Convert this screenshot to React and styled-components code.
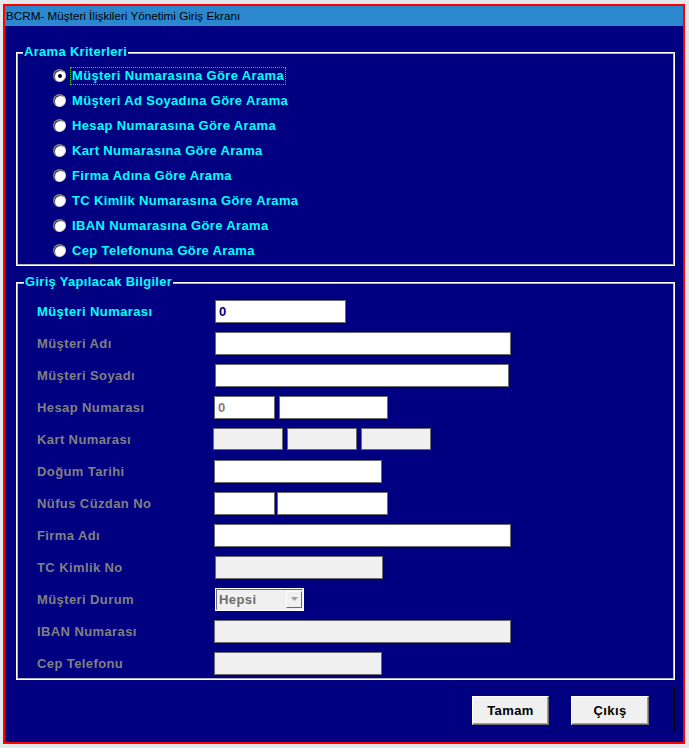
import React from "react";
import styled, { createGlobalStyle } from "styled-components";

const GlobalStyle = createGlobalStyle`
  body {
    margin: 0;
    background: #e4e7eb;
    font-family: "Liberation Sans", Arial, sans-serif;
  }
`;

const Screen = styled.div`
  width: 689px;
  height: 748px;
  box-sizing: border-box;
  padding: 4px 0 0 3px;
  background: #e4e7eb;
`;

const Window = styled.div`
  width: 682px;
  height: 740px;
  box-sizing: border-box;
  border: 2px solid #ff0000;
  display: flex;
  flex-direction: column;
`;

const TitleBar = styled.div`
  height: 20px;
  line-height: 19px;
  padding-left: 1px;
  background: #2b88cf;
  color: #000;
  font-family: "Liberation Sans", Arial, sans-serif;
  font-size: 11.7px;
  white-space: nowrap;
`;

const Body = styled.div`
  flex: 1;
  background: #000080;
  padding: 26px 8px 0 11px;
  display: flex;
  flex-direction: column;
`;

const Group = styled.div`
  position: relative;
  box-sizing: border-box;
  height: ${(p) => p.$height}px;
  margin-top: ${(p) => p.$top || 0}px;
  border: 1px solid #ffffff;
  box-shadow: inset 0 0 0 1px #b4b4b4;
`;

const Legend = styled.span`
  position: absolute;
  top: -9px;
  left: ${(p) => p.$left}px;
  padding: 0 1px;
  background: #000080;
  color: #00ffff;
  font-size: 13px;
  font-weight: bold;
  letter-spacing: 0.3px;
  line-height: 16px;
`;

const RadioList = styled.div`
  display: flex;
  flex-direction: column;
  padding: 10px 0 0 36px;
`;

const RadioRow = styled.div`
  height: 25px;
  display: flex;
  align-items: center;
  gap: 6px;
`;

const RadioCircle = styled.span`
  position: relative;
  width: 13px;
  height: 13px;
  box-sizing: border-box;
  border-radius: 50%;
  background: #fff;
  border: 1px solid;
  border-color: #7a7a7a #d8d8d8 #d8d8d8 #7a7a7a;
  box-shadow: inset 1px 1px 0 #3c3c3c;

  &::after {
    content: "";
    display: ${(p) => (p.$checked ? "block" : "none")};
    position: absolute;
    left: 3.5px;
    top: 3.5px;
    width: 4px;
    height: 4px;
    border-radius: 50%;
    background: #000;
  }
`;

const RadioLabel = styled.span`
  margin-left: -2px;
  padding: 0 1px;
  border: 1px dotted ${(p) => (p.$focused ? "#2fd12f" : "transparent")};
  color: #00ffff;
  font-size: 13px;
  font-weight: bold;
  letter-spacing: 0.35px;
  line-height: 16px;
  white-space: nowrap;
`;

const Form = styled.div`
  display: grid;
  grid-template-columns: 177px 1fr;
  grid-auto-rows: 32px;
  align-items: center;
  padding: 12px 0 0 20px;
`;

const FieldLabel = styled.span`
  color: ${(p) => (p.$active ? "#00ffff" : "#808080")};
  font-size: 13px;
  font-weight: bold;
  letter-spacing: 0.4px;
  white-space: nowrap;
`;

const Inputs = styled.div`
  display: flex;
  align-items: center;
  gap: ${(p) => p.$gap || 0}px;
  margin-left: ${(p) => p.$shift || 0}px;
`;

const TextBox = styled.input`
  box-sizing: border-box;
  width: ${(p) => p.$width}px;
  height: ${(p) => p.$h || 23}px;
  margin: 0;
  padding: 0 3px;
  border: 1px solid #6a6a6a;
  border-radius: 0;
  background: ${(p) => (p.disabled ? "#f0f0f0" : "#ffffff")};
  color: ${(p) => (p.$dim ? "#808080" : "#000080")};
  font-family: "Liberation Sans", Arial, sans-serif;
  font-size: 13px;
  font-weight: bold;
  outline: none;
`;

const SelectBox = styled.div`
  box-sizing: border-box;
  width: 89px;
  height: 23px;
  border: 1px solid #ffffff;
  display: flex;
  margin-left: 1px;
`;

const SelectInner = styled.div`
  flex: 1;
  display: flex;
  align-items: center;
  justify-content: space-between;
  border: 1px solid;
  border-color: #6a6a6a #f0f0f0 #f0f0f0 #6a6a6a;
  background: #f0f0f0;
  padding-left: 2px;
  color: #6d6d6d;
  font-size: 13px;
  font-weight: bold;
  letter-spacing: 0.4px;
`;

const DropButton = styled.span`
  width: 16px;
  height: 17px;
  box-sizing: border-box;
  display: flex;
  align-items: center;
  justify-content: center;
  border: 1px solid;
  border-color: #ffffff #6a6a6a #6a6a6a #ffffff;
  background: #f0f0f0;
`;

const Footer = styled.div`
  display: flex;
  justify-content: flex-end;
  padding-top: 7px;
`;

const ButtonPanel = styled.div`
  box-sizing: border-box;
  width: 226px;
  height: 45px;
  border: 1px solid #000;
  display: flex;
  gap: 22px;
  padding: 8px 0 0 22px;
`;

const Button = styled.button`
  box-sizing: border-box;
  width: ${(p) => p.$width}px;
  height: 29px;
  margin: 0;
  padding: 0;
  background: #f0f0f0;
  border: 1px solid;
  border-color: #ffffff #696969 #696969 #ffffff;
  box-shadow: inset -1px -1px 0 #a0a0a0;
  color: #000;
  font-family: "Liberation Sans", Arial, sans-serif;
  font-size: 13px;
  font-weight: bold;
  letter-spacing: 0.4px;
`;

const criteria = [
  "Müşteri Numarasına Göre Arama",
  "Müşteri Ad Soyadına Göre Arama",
  "Hesap Numarasına Göre Arama",
  "Kart Numarasına Göre Arama",
  "Firma Adına Göre Arama",
  "TC Kimlik Numarasına Göre Arama",
  "IBAN Numarasına Göre Arama",
  "Cep Telefonuna Göre Arama",
];

const Box = ({ w, value = "", off, dim, h }) => (
  <TextBox $width={w} $h={h} $dim={dim} disabled={off} defaultValue={value} readOnly />
);

export default function App() {
  return (
    <Screen>
      <GlobalStyle />
      <Window>
        <TitleBar>BCRM- Müşteri İlişkileri Yönetimi Giriş Ekranı</TitleBar>
        <Body>
          <Group $height={214}>
            <Legend $left={6}>Arama Kriterleri</Legend>
            <RadioList>
              {criteria.map((c, i) => (
                <RadioRow key={c}>
                  <RadioCircle $checked={i === 0} />
                  <RadioLabel $focused={i === 0}>{c}</RadioLabel>
                </RadioRow>
              ))}
            </RadioList>
          </Group>

          <Group $height={398} $top={16}>
            <Legend $left={7}>Giriş Yapılacak Bilgiler</Legend>
            <Form>
              <FieldLabel $active>Müşteri Numarası</FieldLabel>
              <Inputs $shift={1}><Box w={131} value="0" /></Inputs>

              <FieldLabel>Müşteri Adı</FieldLabel>
              <Inputs $shift={1}><Box w={296} /></Inputs>

              <FieldLabel>Müşteri Soyadı</FieldLabel>
              <Inputs $shift={1}><Box w={294} /></Inputs>

              <FieldLabel>Hesap Numarası</FieldLabel>
              <Inputs $gap={4}><Box w={61} value="0" dim /><Box w={109} /></Inputs>

              <FieldLabel>Kart Numarası</FieldLabel>
              <Inputs $gap={4} $shift={-1}>
                <Box w={70} h={22} off />
                <Box w={70} h={22} off />
                <Box w={70} h={22} off />
              </Inputs>

              <FieldLabel>Doğum Tarihi</FieldLabel>
              <Inputs><Box w={168} /></Inputs>

              <FieldLabel>Nüfus Cüzdan No</FieldLabel>
              <Inputs $gap={2}><Box w={61} /><Box w={111} /></Inputs>

              <FieldLabel>Firma Adı</FieldLabel>
              <Inputs><Box w={297} /></Inputs>

              <FieldLabel>TC Kimlik No</FieldLabel>
              <Inputs $shift={1}><Box w={168} off /></Inputs>

              <FieldLabel>Müşteri Durum</FieldLabel>
              <Inputs>
                <SelectBox>
                  <SelectInner>
                    Hepsi
                    <DropButton>
                      <svg width="7" height="4" viewBox="0 0 7 4">
                        <path d="M0 0h7L3.5 4z" fill="#a0a0a0" />
                      </svg>
                    </DropButton>
                  </SelectInner>
                </SelectBox>
              </Inputs>

              <FieldLabel>IBAN Numarası</FieldLabel>
              <Inputs><Box w={297} off /></Inputs>

              <FieldLabel>Cep Telefonu</FieldLabel>
              <Inputs><Box w={168} off /></Inputs>
            </Form>
          </Group>

          <Footer>
            <ButtonPanel>
              <Button $width={77}>Tamam</Button>
              <Button $width={78}>Çıkış</Button>
            </ButtonPanel>
          </Footer>
        </Body>
      </Window>
    </Screen>
  );
}
